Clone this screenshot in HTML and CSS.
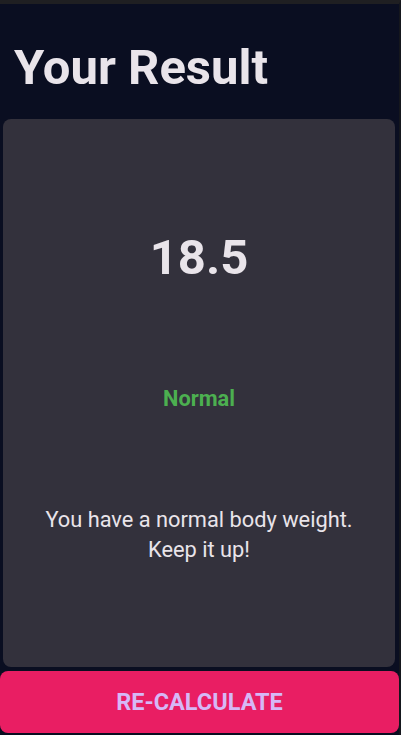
FILE: index.html
```html
<!DOCTYPE html>
<html>
<head>
<meta charset="utf-8">
<link rel="stylesheet" href="styles.css">
</head>
<body>
<div class="screen">
  <h1 class="title">Your Result</h1>
  <div class="card">
    <div class="bmi">18.5</div>
    <div class="status">Normal</div>
    <div class="desc">You have a normal body weight.<br>Keep it up!</div>
  </div>
  <div class="button">RE-CALCULATE</div>
</div>
</body>
</html>
```

FILE: styles.css
```css
html, body {
  margin: 0;
  padding: 0;
  height: 100%;
}
body {
  background: #0a0e21;
  font-family: Roboto, "Noto Sans", sans-serif;
  border-top: 4px solid #1f1f22;
  border-right: 2px solid #15171d;
  box-sizing: border-box;
}
.screen {
  display: flex;
  flex-direction: column;
  height: 731px;
}
.title {
  margin: 0;
  padding: 32px 14px 0;
  height: 115px;
  flex-shrink: 0;
  box-sizing: border-box;
  font-size: 49px;
  font-weight: 700;
  color: #e9e4ea;
  line-height: 64px;
}
.card {
  margin: 0 4px 0 3px;
  background: #33313c;
  border-radius: 8px;
  height: 548px;
  flex-shrink: 0;
  display: flex;
  flex-direction: column;
  align-items: center;
  box-sizing: border-box;
  padding-top: 109px;
}
.bmi {
  font-size: 49px;
  font-weight: 700;
  color: #e9e4ea;
  line-height: 60px;
}
.status {
  margin-top: 98px;
  font-size: 21.8px;
  font-weight: 700;
  color: #4caf50;
  line-height: 26px;
}
.desc {
  margin-top: 93px;
  font-size: 21.8px;
  color: #e9e4ea;
  text-align: center;
  line-height: 30px;
}
.button {
  margin-top: 4px;
  height: 62px;
  flex-shrink: 0;
  background: #e91e63;
  border-radius: 8px;
  display: flex;
  align-items: center;
  justify-content: center;
  font-size: 23.5px;
  font-weight: 700;
  color: #d6b8f6;
}
```
